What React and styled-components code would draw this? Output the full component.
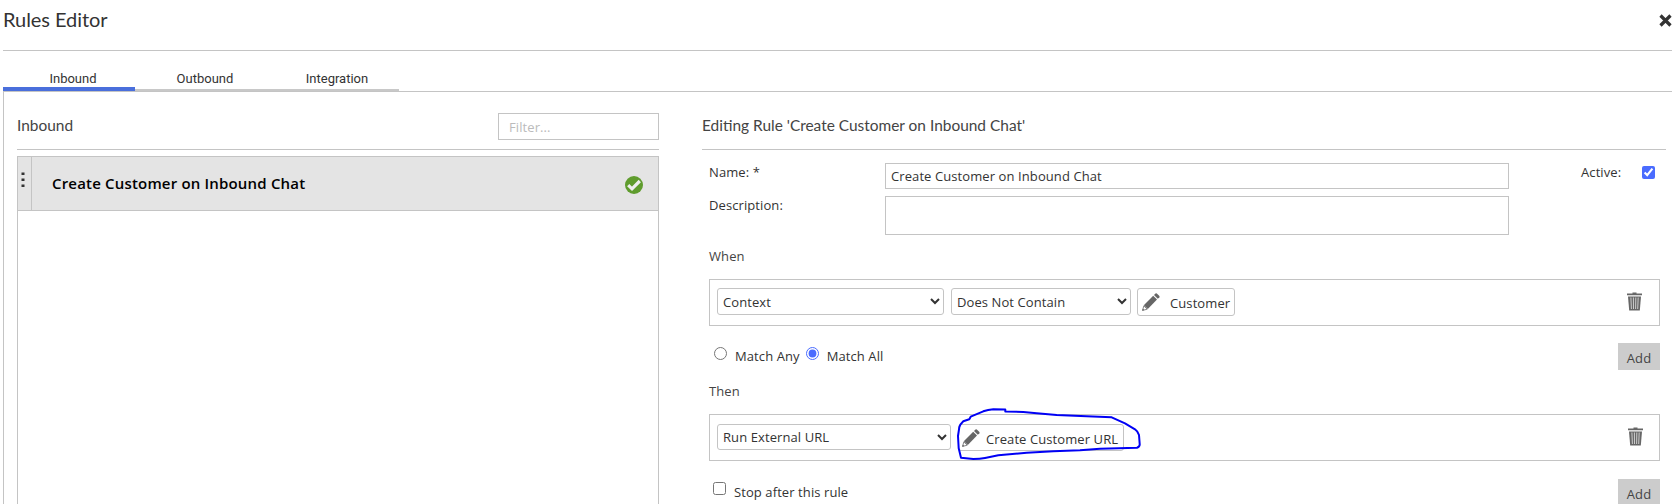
import React from "react";
import styled, { createGlobalStyle } from "styled-components";

const Global = createGlobalStyle`
  * { box-sizing: border-box; }
  html, body { margin: 0; background: #fff; overflow: hidden; }
  body { font-family: "Open Sans", "Noto Sans", sans-serif; font-size: 13px; line-height: 20px; letter-spacing: 0.09px; color: #333; }
  input, select, button, textarea { font: inherit; letter-spacing: inherit; color: inherit; margin: 0; }
`;

const LINE = "#c4c4c4";

const Page = styled.div`
  display: flex;
  flex-direction: column;
  height: 504px;
  padding-left: 3px;
  overflow: hidden;
`;

const Header = styled.header`
  display: flex;
  flex: none;
  justify-content: space-between;
  align-items: center;
  height: 51px;
  padding-bottom: 10px;
  border-bottom: 1px solid ${LINE};
`;

const Title = styled.h1`
  margin: 0 0 2px;
  font: 400 20px/28px Lato, sans-serif;
  letter-spacing: -0.05px;
  color: #333;
`;

const CloseButton = styled.button`
  display: flex;
  padding: 0;
  border: 0;
  background: none;
`;

const Tabs = styled.nav`
  display: flex;
  flex: none;
  align-items: flex-end;
  height: 40px;
`;

const Tab = styled.div`
  width: 132px;
  height: 26px;
  padding-left: 8px;
  border-bottom: ${(p) => (p.$active ? "4px solid #4a6fdc" : "2px solid #c8c8c8")};
  font: 400 13px/28px Roboto, sans-serif;
  letter-spacing: 0;
  text-align: center;
  color: #333;
`;

const Content = styled.main`
  display: flex;
  flex: 1;
  min-height: 0;
  border-top: 1px solid ${LINE};
  border-left: 1px solid ${LINE};
`;

const ListPane = styled.section`
  display: flex;
  flex-direction: column;
  width: 655px;
  padding-left: 13px;
`;

const EditPane = styled.section`
  display: flex;
  flex-direction: column;
  width: 964px;
  margin-left: 43px;
`;

const PaneHeader = styled.div`
  display: flex;
  flex: none;
  justify-content: space-between;
  height: 58px;
  padding-top: 21px;
  border-bottom: 1px solid ${LINE};
`;

const PaneTitle = styled.h2`
  margin: 2px 0 0;
  font: 400 15.45px/20px Lato, sans-serif;
  letter-spacing: 0;
  color: #444;
`;

const FilterInput = styled.input`
  width: 161px;
  height: 27px;
  padding: 1px 10px 0;
  border: 1px solid ${LINE};
  outline: 0;
  &::placeholder { color: #bbb; }
`;

const RuleList = styled.div`
  flex: 1;
  margin-top: 6px;
  border: 1px solid ${LINE};
  border-bottom: 0;
`;

const RuleRow = styled.div`
  display: flex;
  height: 54px;
  background: #e4e4e4;
  border-bottom: 1px solid ${LINE};
`;

const DragHandle = styled.div`
  width: 14px;
  padding: 15px 0 0 3px;
  border-right: 1px solid ${LINE};
`;

const RuleName = styled.div`
  flex: 1;
  padding: 16px 0 0 20px;
  font-size: 15px;
  font-weight: 600;
  letter-spacing: 0.18px;
  color: #000;
`;

const RuleStatus = styled.div`
  display: flex;
  padding: 19px 15px 0 0;
`;

const Form = styled.div`
  display: flex;
  flex-direction: column;
  flex: none;
  padding: 13px 6px 0 7px;
`;

const Field = styled.div`
  display: flex;
  align-items: flex-start;
  margin-bottom: 7px;
`;

const Label = styled.label`
  width: 176px;
  line-height: 18px;
`;

const NameInput = styled.input`
  width: 624px;
  height: 26px;
  padding: 0 5px;
  border: 1px solid ${LINE};
`;

const DescriptionInput = styled.textarea`
  width: 624px;
  height: 39px;
  border: 1px solid ${LINE};
  resize: none;
`;

const ActiveToggle = styled.label`
  display: flex;
  flex: 1;
  justify-content: space-between;
  padding: 0 5px 0 72px;
  line-height: 18px;
`;

const Check = styled.input`
  flex: none;
  width: 13px;
  height: 13px;
  margin: ${(p) => p.$top || 0}px 0 0;
  accent-color: #4a6cff;
`;

const SectionTitle = styled.h3`
  margin: ${(p) => p.$top}px 0 0;
  font: 400 13px/20px "Open Sans", sans-serif;
  color: #444;
`;

const Clause = styled.div`
  display: flex;
  align-items: flex-start;
  height: 47px;
  margin-top: ${(p) => p.$top}px;
  padding: ${(p) => p.$pad}px ${(p) => p.$right}px 0 7px;
  border: 1px solid ${LINE};
`;

const Select = styled.select`
  flex: none;
  width: ${(p) => p.$w}px;
  height: ${(p) => p.$h || 27}px;
  margin-right: ${(p) => p.$gap}px;
  padding: 0 0 0 1px;
  border: 1px solid ${LINE};
  border-radius: 3px;
  background-color: #fff;
`;

const EditValue = styled.button`
  position: relative;
  display: flex;
  flex: none;
  width: ${(p) => p.$w}px;
  height: ${(p) => p.$h || 28}px;
  padding: 4px 0 0 ${(p) => p.$left || 4}px;
  border: 1px solid ${LINE};
  border-radius: 3px;
  background: #fff;
  white-space: nowrap;
  & > svg:first-child { flex: none; }
  & > span { margin: 0 0 0 ${(p) => p.$gap}px; }
`;

const DeleteButton = styled.button`
  display: flex;
  margin: ${(p) => p.$top}px 0 0 auto;
  padding: 0;
  border: 0;
  background: none;
`;

const ActionRow = styled.div`
  display: flex;
  align-items: flex-start;
  height: 27px;
  margin-top: ${(p) => p.$top}px;
`;

const Option = styled.label`
  display: flex;
  align-items: flex-start;
  margin-left: ${(p) => p.$left}px;
  & > span { margin: ${(p) => p.$drop}px 0 0 ${(p) => p.$gap}px; }
`;

const AddButton = styled.button`
  width: 42px;
  height: 27px;
  margin-left: auto;
  padding: 3px 0 0;
  border: 0;
  background: #ccc;
  color: #444;
`;

const Marker = styled.svg`
  position: absolute;
  left: -7px;
  top: -22px;
  overflow: visible;
  pointer-events: none;
`;

const Close = () => (
  <svg width="13" height="13" viewBox="0 0 13 13">
    <path d="M1.5 1.5 11.5 11.5M11.5 1.5 1.5 11.5" stroke="#333" strokeWidth="3.2" />
  </svg>
);

const Dots = () => (
  <svg width="4" height="16" viewBox="0 0 4 16" fill="#333">
    <rect x="0.5" y="0.5" width="3" height="2.5" />
    <rect x="0.5" y="6.5" width="3" height="2.5" />
    <rect x="0.5" y="12.5" width="3" height="2.5" />
  </svg>
);

const Ok = () => (
  <svg width="18" height="18" viewBox="0 0 18 18">
    <circle cx="9" cy="9" r="9" fill="#5f9c2d" />
    <path d="M3.2 9.2 7 12.8 14.8 5" fill="none" stroke="#eee" strokeWidth="3.2" />
  </svg>
);

const Pencil = () => (
  <svg width="18" height="18" viewBox="0 0 18 18">
    <path d="M0.6 17.4 1.8 12.9 5.2 16.2Z" fill="none" stroke="#777" strokeWidth="0.9" />
    <path d="M0.3 17.7 0.8 15.8 2.2 17.1Z" fill="#555" />
    <path d="M1.8 12.2 11.2 2.8 15 6.4 5.8 16Z" fill="#666" />
    <path d="M12 2 13.5 0.5Q14.1 0 14.8 0.5L17.4 3Q17.8 3.6 17.4 4.2L15.8 5.7Z" fill="#666" />
  </svg>
);

const Trash = () => (
  <svg width="16" height="19" viewBox="0 0 16 19">
    <path d="M5.5 0.5H9.5V1.5H15V3.3H0V1.5H5.5Z" fill="#666" />
    <path d="M1 4.5H14L12.8 18.5H2.2Z" fill="#666" />
    <path d="M3.9 5.5 4.4 17M6.4 5.5 6.5 17M8.8 5.5 8.6 17M11.2 5.5 10.7 17" stroke="#d8d8d8" strokeWidth="0.9" />
  </svg>
);

export default function App() {
  return (
    <Page>
      <Global />
      <Header>
        <Title>Rules Editor</Title>
        <CloseButton aria-label="Close"><Close /></CloseButton>
      </Header>
      <Tabs>
        <Tab $active>Inbound</Tab>
        <Tab>Outbound</Tab>
        <Tab>Integration</Tab>
      </Tabs>
      <Content>
        <ListPane>
          <PaneHeader>
            <PaneTitle>Inbound</PaneTitle>
            <FilterInput placeholder="Filter..." />
          </PaneHeader>
          <RuleList>
            <RuleRow>
              <DragHandle><Dots /></DragHandle>
              <RuleName>Create Customer on Inbound Chat</RuleName>
              <RuleStatus><Ok /></RuleStatus>
            </RuleRow>
          </RuleList>
        </ListPane>
        <EditPane>
          <PaneHeader>
            <PaneTitle>Editing Rule 'Create Customer on Inbound Chat'</PaneTitle>
          </PaneHeader>
          <Form>
            <Field>
              <Label>Name: *</Label>
              <NameInput defaultValue="Create Customer on Inbound Chat" />
              <ActiveToggle>
                Active:
                <Check type="checkbox" defaultChecked $top={3} />
              </ActiveToggle>
            </Field>
            <Field>
              <Label>Description:</Label>
              <DescriptionInput />
            </Field>
            <SectionTitle $top={4}>When</SectionTitle>
            <Clause $top={13} $pad={8} $right={16}>
              <Select $w={227} $gap={7}><option>Context</option></Select>
              <Select $w={180} $gap={6}><option>Does Not Contain</option></Select>
              <EditValue $w={98} $gap={10}><Pencil /><span>Customer</span></EditValue>
              <DeleteButton $top={4} aria-label="Delete condition"><Trash /></DeleteButton>
            </Clause>
            <ActionRow $top={17}>
              <Option $left={5} $drop={3} $gap={8}>
                <Check type="radio" name="match" $top={4} />
                <span>Match Any</span>
              </Option>
              <Option $left={6} $drop={3} $gap={8}>
                <Check type="radio" name="match" defaultChecked $top={4} />
                <span>Match All</span>
              </Option>
              <AddButton>Add</AddButton>
            </ActionRow>
            <SectionTitle $top={11}>Then</SectionTitle>
            <Clause $top={13} $pad={9} $right={15}>
              <Select $w={234} $h={26} $gap={7}><option>Run External URL</option></Select>
              <EditValue $w={166} $h={27} $left={3} $gap={6}>
                <Pencil />
                <span>Create Customer URL</span>
                <Marker width="190" height="60" viewBox="0 0 190 60">
                  <path
                    d="M53.3 8.5V6.5L41.3 6.3Q36 6.7 31.3 8.3L18.7 13.7 17.3 16.3 11.3 18.3Q8.3 21 7.3 24.3L6 33 6.7 45.3 9 54.7 21.3 56Q28 56 33 55L46.3 52.3 74.7 49.7 101.3 48.3 128 47.3 148 45.7 185 44.7Q188 43.5 187.7 41L187 32Q186 28.5 183 26.3L173 20.3 159.7 14.3 134.7 13.3 104.7 12 84.7 10.3 71.3 9Z"
                    fill="none"
                    stroke="#0000f5"
                    strokeWidth="2"
                    strokeLinejoin="round"
                  />
                </Marker>
              </EditValue>
              <DeleteButton $top={3} aria-label="Delete action"><Trash /></DeleteButton>
            </Clause>
            <ActionRow $top={18}>
              <Option $left={4} $drop={3} $gap={8}>
                <Check type="checkbox" $top={3} />
                <span>Stop after this rule</span>
              </Option>
              <AddButton>Add</AddButton>
            </ActionRow>
          </Form>
        </EditPane>
      </Content>
    </Page>
  );
}
